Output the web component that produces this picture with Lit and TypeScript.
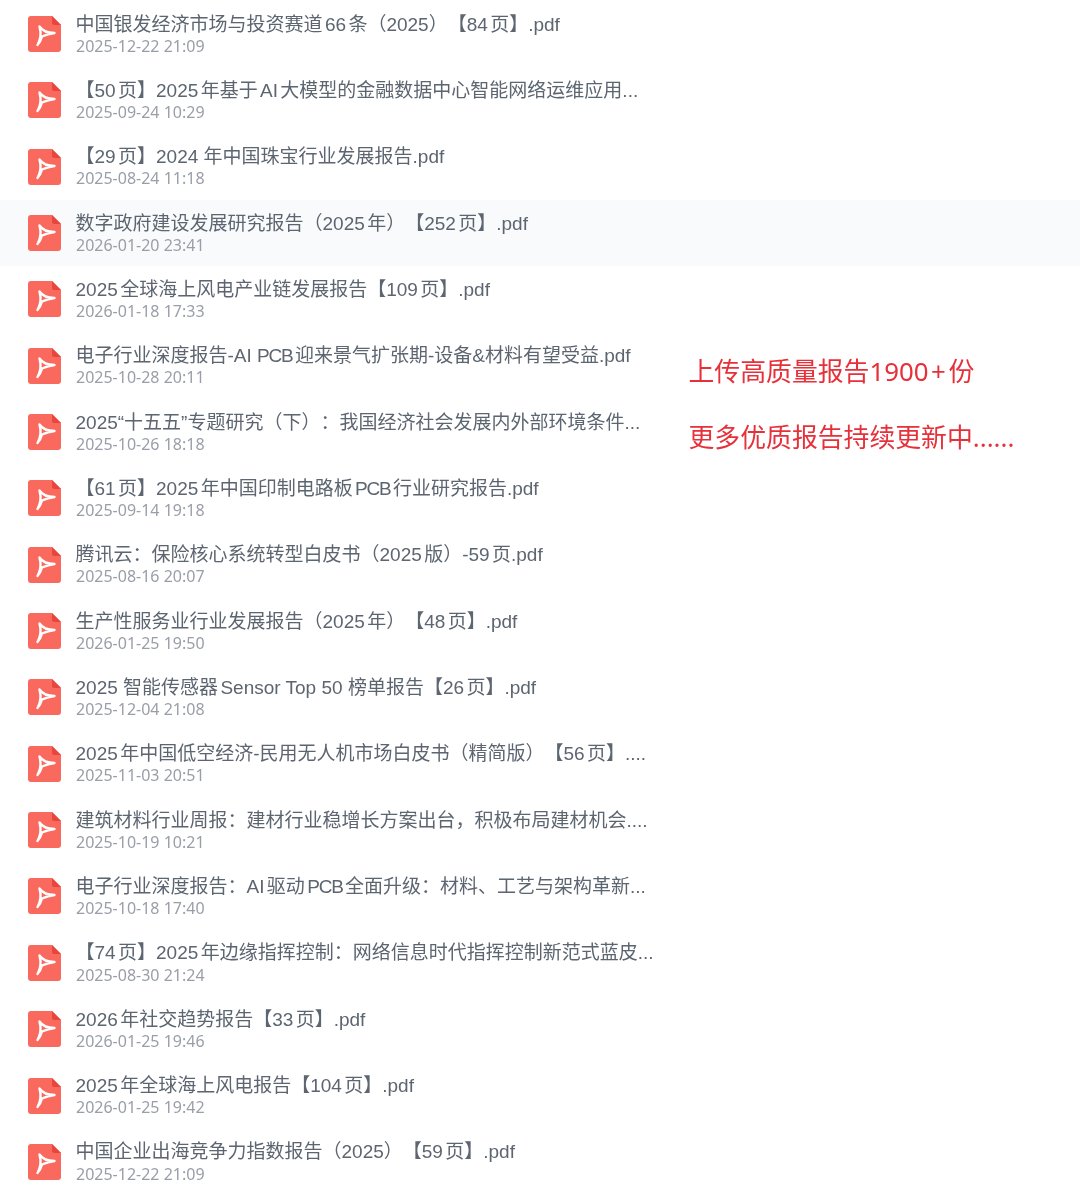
import { LitElement, html, css } from "lit";
import { customElement } from "lit/decorators.js";

const rows: [string, string][] = [
  ["中国银发经济市场与投资赛道66条（2025）【84页】.pdf", "2025-12-22 21:09"],
  ["【50页】2025年基于AI大模型的金融数据中心智能网络运维应用...", "2025-09-24 10:29"],
  ["【29页】2024 年中国珠宝行业发展报告.pdf", "2025-08-24 11:18"],
  ["数字政府建设发展研究报告（2025年）【252页】.pdf", "2026-01-20 23:41"],
  ["2025全球海上风电产业链发展报告【109页】.pdf", "2026-01-18 17:33"],
  ["电子行业深度报告-AI PCB迎来景气扩张期-设备&材料有望受益.pdf", "2025-10-28 20:11"],
  ["2025“十五五”专题研究（下）：我国经济社会发展内外部环境条件...", "2025-10-26 18:18"],
  ["【61页】2025年中国印制电路板PCB行业研究报告.pdf", "2025-09-14 19:18"],
  ["腾讯云：保险核心系统转型白皮书（2025版）-59页.pdf", "2025-08-16 20:07"],
  ["生产性服务业行业发展报告（2025年）【48页】.pdf", "2026-01-25 19:50"],
  ["2025 智能传感器Sensor Top 50 榜单报告【26页】.pdf", "2025-12-04 21:08"],
  ["2025年中国低空经济-民用无人机市场白皮书（精简版）【56页】....", "2025-11-03 20:51"],
  ["建筑材料行业周报：建材行业稳增长方案出台，积极布局建材机会....", "2025-10-19 10:21"],
  ["电子行业深度报告：AI驱动PCB全面升级：材料、工艺与架构革新...", "2025-10-18 17:40"],
  ["【74页】2025年边缘指挥控制：网络信息时代指挥控制新范式蓝皮...", "2025-08-30 21:24"],
  ["2026年社交趋势报告【33页】.pdf", "2026-01-25 19:46"],
  ["2025年全球海上风电报告【104页】.pdf", "2026-01-25 19:42"],
  ["中国企业出海竞争力指数报告（2025）【59页】.pdf", "2025-12-22 21:09"],
];

const title = (t: string) => {
  const parts = t.split("PCB");
  return parts.length === 1
    ? t
    : html`${parts[0]}<span class="caps">PCB</span>${parts[1]}`;
};

@customElement("app-root")
export class AppRoot extends LitElement {
  static styles = css`
    :host {
      display: block;
      width: 1080px;
      height: 1195px;
      overflow: hidden;
      background: #fff;
      font-family: "Noto Sans", "Noto Sans CJK SC", sans-serif;
    }
    .page {
      display: grid;
      grid-template-columns: 1fr;
      padding-top: 1px;
      filter: blur(0.3px);
    }
    .list, .note {
      grid-area: 1 / 1;
    }
    .row {
      height: 66.35px;
      box-sizing: border-box;
      display: flex;
      gap: 14.5px;
      padding: 15px 0 0 28px;
    }
    .row.active {
      background: #f9fafc;
    }
    .icon {
      width: 33px;
      height: 36px;
      flex: none;
    }
    .text {
      margin-top: -3.5px;
      min-width: 0;
      white-space: nowrap;
    }
    .title {
      font-family: "Liberation Sans", "Noto Sans CJK SC", sans-serif;
      font-size: 19px;
      line-height: 23.2px;
      color: #5c6570;
      text-spacing-trim: space-all;
      text-autospace: normal;
    }
    .caps {
      letter-spacing: -1.2px;
    }
    .date {
      font-size: 16px;
      line-height: 20px;
      color: #9a9ea8;
      margin-left: 0.5px;
    }
    .note {
      justify-self: start;
      margin-left: 688.5px;
      padding-top: 352.4px;
      display: flex;
      flex-direction: column;
      gap: 29px;
      color: #e6303a;
      font-size: 25.85px;
      line-height: 37px;
      white-space: nowrap;
    }
  `;

  render() {
    return html`<div class="page">
      <div class="list">
        ${rows.map(
          ([t, d], i) => html`<div class="row ${i === 3 ? "active" : ""}">
            <svg class="icon" viewBox="0 0 33 36">
              <path d="M3 0H24L33 9V33a3 3 0 0 1-3 3H3a3 3 0 0 1-3-3V3a3 3 0 0 1 3-3Z" fill="#f9695d"/>
              <path d="M24 0L33 9H26.5a2.5 2.5 0 0 1-2.5-2.5Z" fill="#e8453c"/>
              <path d="M9.5 29C12.5 24 13.5 18 11.5 10.5C14.5 15 18.5 17 26.5 17C20.5 17.8 17.5 19 14 20.5M14 20.5C13 24 11.5 27 9.5 29" fill="none" stroke="#fff" stroke-width="2.4" stroke-linecap="round" stroke-linejoin="round"/>
            </svg>
            <div class="text">
              <div class="title">${title(t)}</div>
              <div class="date">${d}</div>
            </div>
          </div>`
        )}
      </div>
      <div class="note">
        <div>上传高质量报告1900&#8202;+&#8202;份</div>
        <div>更多优质报告持续更新中......</div>
      </div>
    </div>`;
  }
}
